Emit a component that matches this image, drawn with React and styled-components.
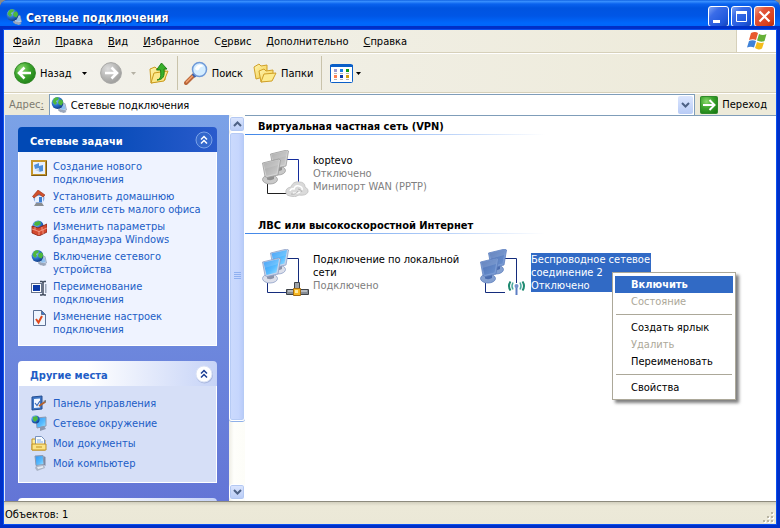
import React from "react";
import styled, { createGlobalStyle, css } from "styled-components";

const FONT = '"DejaVu Sans Condensed", "Noto Sans", sans-serif';

const GlobalStyle = createGlobalStyle`
  * { box-sizing: border-box; }
  body { margin: 0; background: #8a8a86; font: 11px/13px ${FONT}; color: #000; overflow: hidden; }
  button, input { font: inherit; color: inherit; margin: 0; }
  ul { list-style: none; margin: 0; padding: 0; }
  h1, h2, p { margin: 0; }
`;

/* ---------- window frame ---------- */

const Window = styled.div`
  display: flex;
  flex-direction: column;
  height: 100vh;
  border-radius: 8px 8px 0 0;
  overflow: hidden;
  background: #0042e0;
`;

const TitleBar = styled.header`
  display: flex;
  align-items: center;
  flex: none;
  gap: 4px;
  height: 30px;
  padding: 3px 5px 0 6px;
  background: linear-gradient(#0050d8 0, #3c93ff 1px, #2f86fb 2px, #0a62ee 4px, #0054e0 8px, #0056e6 16px, #0068fc 23px, #0066fa 26px, #004fd8 28px, #0038b8 30px);
`;

const Title = styled.h1`
  flex: 1;
  padding-top: 2px;
  font: bold 12px/18px ${FONT};
  color: #fff;
  text-shadow: 1px 1px 1px #0a2a80;
  white-space: nowrap;
`;

const CaptionButtons = styled.div`
  display: flex;
  gap: 2px;
`;

const CaptionButton = styled.button`
  display: grid;
  place-items: center;
  width: 21px;
  height: 21px;
  padding: 0;
  border: 1px solid #fff;
  border-radius: 3px;
  background: ${(p) =>
    p.$close
      ? "linear-gradient(135deg, #f0a088, #e2553a 30%, #d8401c 75%, #b02c10)"
      : "linear-gradient(135deg, #7fa4f4, #3a6ce8 30%, #2058dc 75%, #1644b8)"};
`;

const Client = styled.div`
  display: flex;
  flex-direction: column;
  flex: 1;
  min-height: 0;
  margin: 0 4px 4px;
  background: #ece9d8;
  box-shadow: 0 0 0 1px #0a50f0, 0 0 0 4px #0030c8;
`;

const Bar = styled.div`
  display: flex;
  flex: none;
  background: linear-gradient(90deg, #f3f2ec, #edead9);
  border-bottom: 1px solid #d6d0ba;
`;

const MenuBar = styled(Bar)`
  gap: 1px;
  height: 23px;
`;

const MenuButton = styled.button`
  height: 22px;
  padding: 0 7px;
  border: 0;
  background: none;
  &:first-child { margin-left: 2px; }
`;

const LogoBox = styled.div`
  display: grid;
  place-items: center;
  width: 40px;
  margin-left: auto;
  border-left: 1px solid #d6d0ba;
  background: #fff;
`;

const ToolBar = styled(Bar)`
  align-items: center;
  height: 40px;
  padding-left: 10px;
  border-top: 1px solid #fff;
`;

const ToolButton = styled.button`
  display: flex;
  align-items: center;
  gap: 4px;
  height: 34px;
  padding: 0;
  border: 0;
  background: none;
  margin-right: ${(p) => p.$after || 0}px;
`;

const DropButton = styled(ToolButton)`
  justify-content: center;
  width: 10px;
`;

const Separator = styled.div`
  width: 1px;
  height: 34px;
  background: #c9c3ab;
  margin-right: ${(p) => p.$after || 0}px;
`;

const AddressBar = styled.div`
  display: flex;
  align-items: stretch;
  flex: none;
  height: 22px;
  padding: 0 9px 0 5px;
  gap: 5px;
  border-top: 1px solid #fff;
  background: #edead9;
`;

const AddressLabel = styled.label`
  align-self: center;
  color: #7d7a70;
`;

const Combo = styled.div`
  display: flex;
  align-items: center;
  flex: 1;
  padding: 1px;
  border: 1px solid #7f9db9;
  border-bottom: 0;
  background: #fff;
`;

const AddressInput = styled.input`
  flex: 1;
  min-width: 0;
  padding: 1px 4px 0;
  border: 0;
  outline: 0;
  background: none;
`;

const ComboArrow = styled.button`
  display: grid;
  place-items: center;
  width: 15px;
  height: 100%;
  padding: 0;
  border: 0;
  border-radius: 2px;
  background: linear-gradient(#dce6fe, #b8cbf6);
`;

const GoButton = styled.button`
  display: flex;
  align-items: center;
  gap: 4px;
  padding: 0;
  border: 0;
  background: none;
`;

/* ---------- body ---------- */

const Body = styled.div`
  display: flex;
  flex: 1;
  min-height: 0;
  background: #fff;
`;

const Sidebar = styled.aside`
  width: 225px;
  flex: none;
  padding: 12px 12px 0 13px;
  border-left: 1px solid #dfe8fb;
  overflow: hidden;
  background: linear-gradient(#7ba2e7, #6375d6);
`;

const Panel = styled.section`
  margin-bottom: 15px;
`;

const PanelHead = styled.header`
  display: flex;
  align-items: center;
  justify-content: space-between;
  height: 25px;
  padding: 0 3px 0 12px;
  border-radius: 4px 4px 0 0;
  color: ${(p) => (p.$primary ? "#fff" : "#215dc6")};
  background: ${(p) =>
    p.$primary
      ? "linear-gradient(90deg, #0149b5, #0149b5 35%, #2a5bcc)"
      : "linear-gradient(90deg, #fff, #fff 35%, #c6d3f7)"};
`;

const PanelTitle = styled.h2`
  font: bold 11px/13px ${FONT};
  padding-top: 3px;
`;

const Collapse = styled.button`
  display: block;
  width: 20px;
  height: 20px;
  padding: 0;
  border: 0;
  background: none;
`;

const PanelBody = styled.ul`
  display: grid;
  gap: 4px;
  padding: ${(p) => (p.$primary ? "8px 8px 9px 12px" : "9px 8px 11px 12px")};
  border: 1px solid #fff;
  border-top: 0;
  background: ${(p) => (p.$primary ? "#eff3ff" : "#d6dff7")};
`;

const TaskLink = styled.a`
  display: flex;
  gap: 6px;
  align-items: ${(p) => (p.$single ? "center" : "flex-start")};
  min-height: 16px;
  color: #215dc6;
  text-decoration: none;
  white-space: pre;
  svg { flex: none; }
`;

const ScrollBar = styled.div`
  display: flex;
  flex-direction: column;
  flex: none;
  width: 16px;
  padding: 1px 0;
  background: linear-gradient(90deg, #eeede5, #fefefb 30%, #fdfdf8);
`;

const ScrollButton = styled.button`
  display: grid;
  place-items: center;
  flex: none;
  height: 16px;
  padding: 0;
  border: 1px solid #fff;
  border-radius: 3px;
  background: linear-gradient(#dce6fe, #b8cbf6);
  box-shadow: inset 0 0 0 1px #b3c8f2;
`;

const Track = styled.div`
  flex: 1;
`;

const Thumb = styled.div`
  display: grid;
  place-items: center;
  height: 82%;
  border: 1px solid #fff;
  border-radius: 3px;
  background: linear-gradient(90deg, #cbdafd, #c6d6fd 60%, #b6c9f8);
  box-shadow: inset 0 0 0 1px #b6cbf5, 0 1px 0 #8fb0e8;
`;

const Content = styled.main`
  flex: 1;
  min-width: 0;
  border-top: 1px solid #7f9db9;
`;

const Group = styled.section`
  height: 99px;
`;

const GroupTitle = styled.h2`
  padding: 4px 0 1px 13px;
  font: bold 11px/13px ${FONT};
`;

const Rule = styled.div`
  width: 300px;
  max-width: 100%;
  height: 1px;
  background: linear-gradient(90deg, #3f86e8, #b5cff8 65%, #fff);
`;

const Items = styled.div`
  display: flex;
  padding: 15px 0 0 17px;
`;

const Item = styled.div`
  position: relative;
  display: flex;
  gap: 4px;
  width: 218px;
`;

const ItemText = styled.div`
  margin-top: 4px;
  height: 39px;
  padding-right: 2px;
  white-space: nowrap;
  p { color: #000; }
  p:last-child, p.detail { color: #808080; }
  ${(p) =>
    p.$selected &&
    css`
      width: 120px;
      background: #316ac5;
      p, p:last-child { color: #fff; }
    `}
`;

const ContextMenu = styled.div`
  position: absolute;
  left: 132px;
  top: 23px;
  width: 124px;
  padding: 3px 2px 3px;
  border: 1px solid #aca899;
  background: #fff;
  box-shadow: 3px 3px 3px rgba(0, 0, 0, 0.5);
`;

const MenuItem = styled.button`
  display: block;
  width: 100%;
  height: 17px;
  padding: 0 0 0 16px;
  border: 0;
  text-align: left;
  white-space: nowrap;
  background: ${(p) => (p.$active ? "#316ac5" : "none")};
  color: ${(p) => (p.$active ? "#fff" : "#000")};
  font-weight: ${(p) => (p.$active ? "bold" : "normal")};
  &:disabled { color: #aca899; }
`;

const MenuRule = styled.hr`
  height: 1px;
  margin: 4px 1px;
  border: 0;
  background: #aca899;
`;

const StatusBar = styled.footer`
  display: flex;
  align-items: center;
  justify-content: space-between;
  flex: none;
  height: 23px;
  padding: 3px 1px 0;
  border-top: 1px solid #8d8b7e;
  background: linear-gradient(#d2cfbe, #ece9d8 4px, #ebe8d7);
  svg { align-self: flex-end; }
`;

/* ---------- drawings ---------- */

const DefsSvg = styled.svg`
  display: block;
  width: 0;
  height: 0;
`;

const Defs = () => (
  <DefsSvg aria-hidden="true">
    <defs>
      <radialGradient id="globe" cx=".35" cy=".3" r=".8">
        <stop offset="0" stopColor="#9fd0f8" /><stop offset=".5" stopColor="#2b74cf" /><stop offset="1" stopColor="#0c3278" />
      </radialGradient>
      <radialGradient id="green" cx=".35" cy=".3" r=".8">
        <stop offset="0" stopColor="#8ada6c" /><stop offset=".5" stopColor="#3ba32c" /><stop offset="1" stopColor="#1c7d14" />
      </radialGradient>
      <radialGradient id="gray" cx=".35" cy=".3" r=".8">
        <stop offset="0" stopColor="#dedede" /><stop offset=".6" stopColor="#b2b2b0" /><stop offset="1" stopColor="#989896" />
      </radialGradient>
      <linearGradient id="folder" x1="0" y1="0" x2="1" y2="1">
        <stop offset="0" stopColor="#fff6b0" /><stop offset="1" stopColor="#f2ca48" />
      </linearGradient>
      <linearGradient id="blueScreen" x1="0" y1="0" x2="1" y2="1">
        <stop offset="0" stopColor="#2f93f4" /><stop offset=".6" stopColor="#58bcff" /><stop offset="1" stopColor="#a4e4ff" />
      </linearGradient>
      <linearGradient id="grayScreen" x1="0" y1="0" x2="1" y2="1">
        <stop offset="0" stopColor="#a2a2a2" /><stop offset="1" stopColor="#cfcfcf" />
      </linearGradient>
      <linearGradient id="selScreen" x1="0" y1="0" x2="1" y2="1">
        <stop offset="0" stopColor="#4d70b4" /><stop offset="1" stopColor="#6b92cf" />
      </linearGradient>
    </defs>
  </DefsSvg>
);

const Svg = ({ s = 16, w, h, children }) => (
  <svg width={w || s} height={h || s} viewBox={`0 0 ${w || s} ${h || s}`} fill="none" aria-hidden="true">{children}</svg>
);

const NetGlobe = () => (
  <Svg>
    <path d="M8 8l6-1.500 1.500 6.500-6 2z" fill="#c6d3e6" stroke="#8796b0" strokeWidth=".7" />
    <path d="M9.500 9l4-1 1 4-4 1z" fill="#8fc0ee" />
    <path d="M7 12l7 1.500 1.500 1.500-3 1-5-2z" fill="#9aa6ba" />
    <circle cx="6.500" cy="6" r="5.900" fill="url(#globe)" />
    <path d="M3 1.500q3-2 5-.5l-1 2-2 1 1 2-2 2-2.500-3zM8 3l3-.5 1.300 3-1.800 3-2.500-1-1-2z" fill="#4fb83c" />
  </Svg>
);

const Round = ({ gray }) => (
  <Svg s={22}>
    <circle cx="11" cy="11" r="10.400" fill={gray ? "url(#gray)" : "url(#green)"} stroke={gray ? "#a8a8a6" : "#2d8522"} />
    <path d={gray ? "M5 11h11M11.500 5.500L17 11l-5.500 5.500" : "M17 11H6M10.500 5.500L5 11l5.500 5.500"} stroke="#fff" strokeWidth="2.600" />
  </Svg>
);

const Caret = ({ color = "#000" }) => (
  <Svg w={5} h={3}><path d="M0 0h5L2.500 3z" fill={color} /></Svg>
);

const UpFolder = () => (
  <Svg w={20} h={22}>
    <path d="M1 7l5-2 2 2 8-1v12L2 21z" fill="url(#folder)" stroke="#c99a1e" />
    <path d="M2 21l3-10 14-2-4 10z" fill="#fce88a" stroke="#c99a1e" />
    <path d="M8 18c4-1 4-4 3.500-10H7.500L12.500 1 18 7h-3c1 7-1 11-7 11z" fill="#38b02a" stroke="#187a12" strokeWidth=".9" />
  </Svg>
);

const Search = () => (
  <Svg w={24} h={24}>
    <path d="M10 14l-8 8" stroke="#b9663a" strokeWidth="4" strokeLinecap="round" />
    <path d="M10 13.500l-7.500 7.500" stroke="#f3a16e" strokeWidth="1.500" strokeLinecap="round" />
    <path d="M8.500 13l3 3" stroke="#3a5fa8" strokeWidth="2" />
    <circle cx="15.500" cy="8.500" r="7" fill="#d4edff" stroke="#6f9ad8" strokeWidth="1.500" />
    <path d="M11 8q1-4 5-4.500 3 0 3 2-3 0-4 3-2 2-4-.5z" fill="#fff" />
  </Svg>
);

const Folders = () => (
  <Svg w={24} h={22}>
    <path d="M1 5l5-3 2 2 6-1v11L3 17z" fill="url(#folder)" stroke="#d0a028" />
    <path d="M6 9l5-2 2 2 7-1v9L8 20z" fill="url(#folder)" stroke="#d0a028" />
    <path d="M8 20l3-8 12-1-4 8z" fill="#fdeb8e" stroke="#d0a028" />
  </Svg>
);

const Views = () => (
  <Svg w={23} h={19}>
    <rect x=".5" y=".5" width="22" height="18" rx="1" fill="#fff" stroke="#0a5fc8" />
    <path d="M0 1h23v2H0z" fill="#0a5fc8" />
    <path d="M4 5h3v3H4z" fill="#9c9ad0" /><path d="M10 5h3v3h-3z" fill="#1a80e8" /><path d="M16 5h3v3h-3z" fill="#0c9c18" />
    <path d="M4 11h3v3H4z" fill="#ff8050" /><path d="M10 11h3v3h-3z" fill="#0838a8" /><path d="M16 11h3v3h-3z" fill="#d4a010" />
    <path d="M4 9.500h3m3 0h3m3 0h3M4 15.500h3m3 0h3m3 0h3" stroke="#b4b4b4" />
  </Svg>
);

const WinLogo = () => (
  <Svg w={20} h={18}>
    <path d="M4 1q4-2 7 0L9 8Q6 6.500 2 8z" fill="#e8582c" />
    <path d="M12 2q4 2 7.500 0L17.500 9Q14 10.500 10 8.500z" fill="#66b038" />
    <path d="M2 9q3.500-1.500 7 0l-2 6.500Q4 14 0 15.500z" fill="#3f82d8" />
    <path d="M10 10q3.500 1.500 7 .5l-2 6q-3.500 2-7-.5z" fill="#f4bc1c" />
  </Svg>
);

const Go = () => (
  <Svg s={18}>
    <rect x=".5" y=".5" width="17" height="17" rx="1" fill="url(#green)" stroke="#2f8a2a" />
    <path d="M3 9h11M9.500 4l5 5-5 5" stroke="#fff" strokeWidth="2" />
  </Svg>
);

const Chevron = ({ up }) => (
  <Svg w={9} h={6}><path d={up ? "M1 5l3.500-3.500L8 5" : "M1 1l3.500 3.500L8 1"} stroke="#4d6185" strokeWidth="2" /></Svg>
);

const DoubleUp = ({ primary }) => (
  <Svg s={20}>
    <circle cx="10.500" cy="11" r="8.500" fill={primary ? "none" : "#8c9cc8"} opacity=".5" />
    <circle cx="10" cy="10" r="8" fill={primary ? "#3468cc" : "#fff"} stroke={primary ? "#7ba2e8" : "#dbe3f6"} />
    <path d="M7 9.500l3-3 3 3M7 13.500l3-3 3 3" stroke={primary ? "#fff" : "#1c3f94"} strokeWidth="1.500" />
  </Svg>
);

const Icons = {
  create: (
    <Svg>
      <rect x="1" y="1" width="14" height="14" fill="#e8f1ff" stroke="#c6962c" strokeWidth="2" />
      <path d="M3 5l5-2v5l-4 1zM8 6l4-1v6l-4 1z" fill="#4f90dc" /><path d="M4 10l4-1 1 3z" fill="#b8cbe6" />
      <path d="M.5 15.500h15V1" stroke="#7d5c14" />
    </Svg>
  ),
  home: (
    <Svg>
      <circle cx="8" cy="8" r="5.500" fill="#8cabe0" />
      <path d="M4 6h8v6H4z" fill="#e8f0fc" /><path d="M1.500 6.500L7 0l7 5-2 2-4-3-5 4z" fill="#d2502c" stroke="#94301a" strokeWidth=".6" />
      <path d="M8 7h3v5H8z" fill="#3d7ed2" /><path d="M5 13h6l2 3H3z" fill="#8b8d90" />
    </Svg>
  ),
  firewall: (
    <Svg>
      <circle cx="7" cy="6" r="5.500" fill="url(#globe)" /><path d="M4 2l5-1 1 3-4 2-3-1z" fill="#4bb43c" />
      <path d="M1 6l6 2 9-4v8l-8 4-7-3z" fill="#d44a30" stroke="#862010" strokeWidth=".8" />
      <path d="M1 9l7 2.500L16 8M4 7v3m7-3v3M8 11v4m4-5v4" stroke="#f6a894" strokeWidth=".8" />
    </Svg>
  ),
  rename: (
    <Svg>
      <rect x=".5" y="3.500" width="10" height="9" fill="#fff" stroke="#66728a" /><path d="M2 5h7v6H2z" fill="#0a38a8" />
      <path d="M9 1.500h2l1 1 1-1h2M9 15h2l1-1 1 1h2M12 2v12" stroke="#3f4a5c" strokeWidth="1.500" /><path d="M14 4v9h1.500V4z" fill="#9aa5b8" />
    </Svg>
  ),
  settings: (
    <Svg>
      <path d="M2.500.5h8l4 4v11h-12z" fill="#eef5ff" stroke="#5c7094" /><path d="M10.500.5v4h4z" fill="#3f7acc" stroke="#5c7094" />
      <path d="M5 9l2.500 3.500L11 6" stroke="#e0491c" strokeWidth="2" />
    </Svg>
  ),
  panel: (
    <Svg>
      <path d="M1 2l10-1v13L1 15z" fill="#3e76c6" stroke="#234d90" /><path d="M3 4l6-.5v9L3 13z" fill="#f0f6ff" />
      <path d="M4 8l2 2.500L9 6" stroke="#3668b8" strokeWidth="1.200" /><path d="M8 11l6-4" stroke="#b4622c" strokeWidth="2" /><path d="M12 6l3-1v3z" fill="#777" />
    </Svg>
  ),
  places: (
    <Svg>
      <path d="M5 3l10-1v9l-9 2z" fill="url(#blueScreen)" stroke="#8c99b2" /><circle cx="4.500" cy="4.500" r="4" fill="url(#globe)" />
      <path d="M2 2l4-1 1 3-3 3-2-2z" fill="#4fb83c" /><path d="M9 12l4-1 2 3-6 2z" fill="#8a97b0" />
    </Svg>
  ),
  docs: (
    <Svg>
      <path d="M1 4h4l1 1h8v10H1z" fill="url(#folder)" stroke="#c29222" /><path d="M4.500 1.500h6l3 3v8h-9z" fill="#f7fbff" stroke="#7892be" />
      <path d="M6 5h4M6 7h6" stroke="#7eaae4" /><path d="M1 9h14v6H1z" fill="#fbe384" stroke="#c29222" />
      <path d="M5 12h6" stroke="#c29222" />
    </Svg>
  ),
  computer: (
    <Svg>
      <path d="M4 1l8-.5 1 9-8 1z" fill="url(#blueScreen)" stroke="#8e9ab0" /><path d="M12.500 1l2 1v9l-1.500-1z" fill="#7d8aa4" />
      <path d="M5 11l8-1 1 3-8 3-2-3z" fill="#aab4c6" /><path d="M6 12l6-1 .5 1.500L7 14z" fill="#e6ebf2" />
    </Svg>
  ),
};
Icons.enable = <NetGlobe />;

const palettes = {
  on: { screen: "url(#blueScreen)", frame: "#c9d4ea", edge: "#8da0c6", base: "#dcdfea", neck: "#8b93aa", wire: "#142c7c", low: "#142c7c" },
  off: { screen: "url(#grayScreen)", frame: "#d2d2d2", edge: "#9a9a9a", base: "#c9c9c9", neck: "#909090", wire: "#142c9c", low: "#202020" },
  selected: { screen: "url(#selScreen)", frame: "#7a9bd4", edge: "#5f80be", base: "#84a0d0", neck: "#4a6cae", wire: "#142c7c", low: "#142c7c" },
};

const Monitor = ({ c }) => (
  <g>
    <ellipse cx="8" cy="24.500" rx="7.500" ry="4.500" fill={c.base} stroke={c.edge} strokeWidth=".8" />
    <path d="M5 20l7-1v5q-3 2-7 .5z" fill={c.neck} />
    <path d="M.5 8L17 4l1.500 1L16 20 5 22.500l-2-1z" fill={c.frame} stroke={c.edge} strokeWidth=".8" />
    <path d="M1.500 8.500L17 5l-2.500 13.500-10 2.500z" fill={c.screen} />
    <path d="M1.500 8.500L17 5l-.8 5-13.700 4z" fill="#fff" opacity=".14" />
  </g>
);

const ConnectionIcon = ({ state, kind }) => {
  const c = palettes[state];
  return (
    <Svg s={47}>
      <path d="M25 9.500h11.500V34" stroke={c.wire} />
      <path d="M5.500 34v9.500H25" stroke={c.low} />
      <g transform="translate(8 -4)"><Monitor c={c} /></g>
      <g transform="translate(0 5)"><Monitor c={c} /></g>
      {kind === "lan" && (
        <g stroke="#3f4348">
          <path d="M32.500 33.500h5V41h-5z" fill="#9da2a8" />
          <path d="M24.500 40.500h22v5h-22z" fill="#868c94" />
          <path d="M26 42h19" stroke="#e3e6ea" />
          <path d="M31.500 39.500h7v7h-7z" fill="#f6b824" stroke="#a46c10" />
          <path d="M33 41h3v3h-3z" fill="#ffe9a0" stroke="none" />
        </g>
      )}
      {kind === "vpn" && (
        <g>
          <path d="M24 43q-1-5 5-6 2-6 8-5 6 0 6 5 4 2 3 5-2 4-9 3-4 3-9 1-3 0-4-3z" fill="#dadada" stroke="#c8c8c8" />
          <path d="M28 41q1-3 4-2 1-4 5-3 4 1 3 4M31 43q4 1 7-1" stroke="#fff" strokeWidth="1.500" />
          <path d="M29 44q5 1 7-3m0-2q3 0 4 3" stroke="#aaa" strokeWidth=".8" />
        </g>
      )}
      {kind === "wifi" && (
        <g>
          <path d="M36.500 37v9" stroke="#5c7ec4" strokeWidth="2" /><circle cx="36.500" cy="37" r="2" fill="#7494cc" />
          <path d="M33 33.500q-2 3.500 0 7M40 33.500q2 3.500 0 7" stroke="#4aa89c" strokeWidth="1.500" />
          <path d="M30.500 32.500q-3 4.500 0 9M42.500 32.500q3 4.500 0 9" stroke="#1f8a70" strokeWidth="2" />
        </g>
      )}
    </Svg>
  );
};

const Grip = () => (
  <Svg s={13}>
    <path d="M10 2h2v2h-2zM6 6h2v2H6zM10 6h2v2h-2zM2 10h2v2H2zM6 10h2v2H6zM10 10h2v2h-2z" fill="#fff" />
    <path d="M9 1h2v2H9zM5 5h2v2H5zM9 5h2v2H9zM1 9h2v2H1zM5 9h2v2H5zM9 9h2v2H9z" fill="#b8b4a2" />
  </Svg>
);

/* ---------- data ---------- */

const menus = [["", "Ф", "айл"], ["", "П", "равка"], ["", "В", "ид"], ["", "И", "збранное"], ["С", "е", "рвис"], ["", "Д", "ополнительно"], ["", "С", "правка"]];

const tasks = [
  ["create", "Создание нового\nподключения"],
  ["home", "Установить домашнюю\nсеть или сеть малого офиса"],
  ["firewall", "Изменить параметры\nбрандмауэра Windows"],
  ["enable", "Включение сетевого\nустройства"],
  ["rename", "Переименование\nподключения"],
  ["settings", "Изменение настроек\nподключения"],
];

const places = [
  ["panel", "Панель управления"],
  ["places", "Сетевое окружение"],
  ["docs", "Мои документы"],
  ["computer", "Мой компьютер"],
];

const SidePanel = ({ title, primary, links }) => (
  <Panel>
    <PanelHead $primary={primary}>
      <PanelTitle>{title}</PanelTitle>
      {title && <Collapse aria-label={title}><DoubleUp primary={primary} /></Collapse>}
    </PanelHead>
    <PanelBody $primary={primary}>
      {links.map(([icon, text]) => (
        <li key={icon}><TaskLink href="#" $single={!primary}>{Icons[icon]}<span>{text}</span></TaskLink></li>
      ))}
    </PanelBody>
  </Panel>
);

export default function App() {
  return (
    <>
      <GlobalStyle />
      <Defs />
      <Window>
        <TitleBar>
          <NetGlobe />
          <Title>Сетевые подключения</Title>
          <CaptionButtons>
            <CaptionButton aria-label="Свернуть"><Svg s={19}><path d="M4 13h7v3H4z" fill="#fff" /></Svg></CaptionButton>
            <CaptionButton aria-label="Развернуть"><Svg s={19}><path d="M4.500 5v9.500h10V5M4 5.500h11" stroke="#fff" /><path d="M4 4h11v3H4z" fill="#fff" /></Svg></CaptionButton>
            <CaptionButton $close aria-label="Закрыть"><Svg s={19}><path d="M4.500 4.500l10 10m0-10l-10 10" stroke="#fff" strokeWidth="2.200" /></Svg></CaptionButton>
          </CaptionButtons>
        </TitleBar>
        <Client>
          <MenuBar as="nav">
            {menus.map(([a, u, b]) => <MenuButton key={u + b}>{a}<u>{u}</u>{b}</MenuButton>)}
            <LogoBox><WinLogo /></LogoBox>
          </MenuBar>
          <ToolBar>
            <ToolButton $after={8}><Round />Назад</ToolButton>
            <DropButton $after={10} aria-label="Список назад"><Caret /></DropButton>
            <ToolButton $after={7} aria-label="Вперед"><Round gray /></ToolButton>
            <DropButton $after={10} aria-label="Список вперед"><Caret color="#b4b1a4" /></DropButton>
            <ToolButton $after={8} aria-label="Вверх"><UpFolder /></ToolButton>
            <Separator $after={6} />
            <ToolButton $after={10}><Search />Поиск</ToolButton>
            <ToolButton $after={8}><Folders />Папки</ToolButton>
            <Separator $after={8} />
            <ToolButton aria-label="Вид"><Views /></ToolButton>
            <DropButton aria-label="Варианты вида"><Caret /></DropButton>
          </ToolBar>
          <AddressBar>
            <AddressLabel htmlFor="address">Адрес<u>:</u></AddressLabel>
            <Combo>
              <NetGlobe />
              <AddressInput id="address" defaultValue="Сетевые подключения" />
              <ComboArrow aria-label="Показать список"><Chevron /></ComboArrow>
            </Combo>
            <GoButton><Go />Переход</GoButton>
          </AddressBar>
          <Body>
            <Sidebar>
              <SidePanel title="Сетевые задачи" primary links={tasks} />
              <SidePanel title="Другие места" links={places} />
              <SidePanel title="" links={[]} />
            </Sidebar>
            <ScrollBar>
              <ScrollButton aria-label="Вверх"><Chevron up /></ScrollButton>
              <Track>
                <Thumb><Svg w={7} h={8}><path d="M0 .5h7M0 2.500h7M0 4.500h7M0 6.500h7" stroke="#8fb0f0" /></Svg></Thumb>
              </Track>
              <ScrollButton aria-label="Вниз"><Chevron /></ScrollButton>
            </ScrollBar>
            <Content>
              <Group>
                <GroupTitle>Виртуальная частная сеть (VPN)</GroupTitle>
                <Rule />
                <Items>
                  <Item>
                    <ConnectionIcon state="off" kind="vpn" />
                    <ItemText><p>koptevo</p><p className="detail">Отключено</p><p>Минипорт WAN (PPTP)</p></ItemText>
                  </Item>
                </Items>
              </Group>
              <Group>
                <GroupTitle>ЛВС или высокоскоростной Интернет</GroupTitle>
                <Rule />
                <Items>
                  <Item>
                    <ConnectionIcon state="on" kind="lan" />
                    <ItemText><p>Подключение по локальной<br />сети</p><p>Подключено</p></ItemText>
                  </Item>
                  <Item>
                    <ConnectionIcon state="selected" kind="wifi" />
                    <ItemText $selected><p>Беспроводное сетевое<br />соединение 2</p><p>Отключено</p></ItemText>
                    <ContextMenu>
                      <MenuItem $active>Включить</MenuItem>
                      <MenuItem disabled>Состояние</MenuItem>
                      <MenuRule />
                      <MenuItem>Создать ярлык</MenuItem>
                      <MenuItem disabled>Удалить</MenuItem>
                      <MenuItem>Переименовать</MenuItem>
                      <MenuRule />
                      <MenuItem>Свойства</MenuItem>
                    </ContextMenu>
                  </Item>
                </Items>
              </Group>
            </Content>
          </Body>
          <StatusBar>Объектов: 1<Grip /></StatusBar>
        </Client>
      </Window>
    </>
  );
}
